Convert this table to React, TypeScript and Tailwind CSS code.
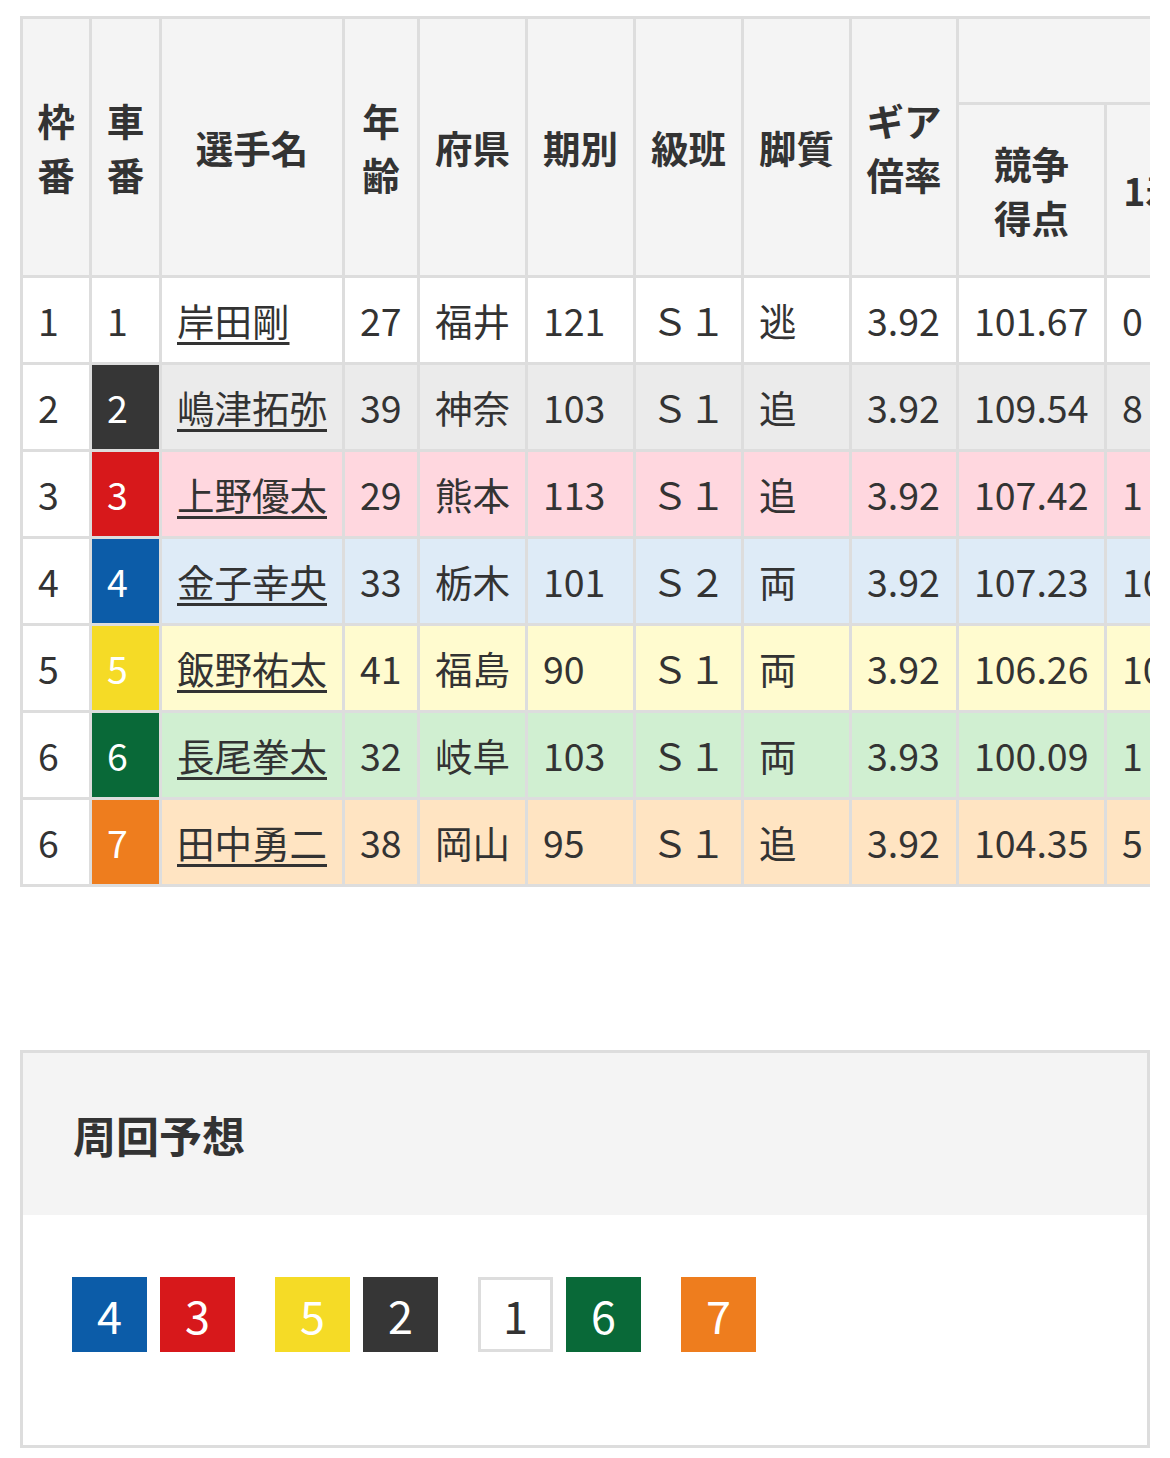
type Racer = {
  waku: number;
  car: number;
  name: string;
  age: string;
  pref: string;
  term: string;
  rank: string;
  style: string;
  gear: string;
  score: string;
  first: string;
  rowBg: string;
  carBg: string;
  carText: string;
};

const racers: Racer[] = [
  { waku: 1, car: 1, name: '岸田剛', age: '27', pref: '福井', term: '121', rank: 'Ｓ１', style: '逃', gear: '3.92', score: '101.67', first: '0', rowBg: 'bg-white', carBg: 'bg-white', carText: 'text-[#333]' },
  { waku: 2, car: 2, name: '嶋津拓弥', age: '39', pref: '神奈', term: '103', rank: 'Ｓ１', style: '追', gear: '3.92', score: '109.54', first: '8', rowBg: 'bg-[#ebebeb]', carBg: 'bg-[#363636]', carText: 'text-white' },
  { waku: 3, car: 3, name: '上野優太', age: '29', pref: '熊本', term: '113', rank: 'Ｓ１', style: '追', gear: '3.92', score: '107.42', first: '1', rowBg: 'bg-[#ffd7df]', carBg: 'bg-[#d7181b]', carText: 'text-white' },
  { waku: 4, car: 4, name: '金子幸央', age: '33', pref: '栃木', term: '101', rank: 'Ｓ２', style: '両', gear: '3.92', score: '107.23', first: '10', rowBg: 'bg-[#deebf7]', carBg: 'bg-[#0c5ca8]', carText: 'text-white' },
  { waku: 5, car: 5, name: '飯野祐太', age: '41', pref: '福島', term: '90', rank: 'Ｓ１', style: '両', gear: '3.92', score: '106.26', first: '10', rowBg: 'bg-[#fffbcf]', carBg: 'bg-[#f5db26]', carText: 'text-white' },
  { waku: 6, car: 6, name: '長尾拳太', age: '32', pref: '岐阜', term: '103', rank: 'Ｓ１', style: '両', gear: '3.93', score: '100.09', first: '1', rowBg: 'bg-[#d0efd1]', carBg: 'bg-[#096938]', carText: 'text-white' },
  { waku: 6, car: 7, name: '田中勇二', age: '38', pref: '岡山', term: '95', rank: 'Ｓ１', style: '追', gear: '3.92', score: '104.35', first: '5', rowBg: 'bg-[#ffe4c2]', carBg: 'bg-[#ee7d1e]', carText: 'text-white' },
];

const chips = [
  [
    { n: 4, cls: 'bg-[#0c5ca8] text-white' },
    { n: 3, cls: 'bg-[#d7181b] text-white' },
  ],
  [
    { n: 5, cls: 'bg-[#f5db26] text-white' },
    { n: 2, cls: 'bg-[#363636] text-white' },
  ],
  [
    { n: 1, cls: 'bg-white text-[#333] border-[3px] border-[#ddd]' },
    { n: 6, cls: 'bg-[#096938] text-white' },
  ],
  [{ n: 7, cls: 'bg-[#ee7d1e] text-white' }],
];

function Th({ children, className = '' }: { children?: React.ReactNode; className?: string }) {
  return (
    <div className={`bg-[#f4f4f4] flex items-center justify-center text-center font-bold leading-[54px] ${className}`}>
      {children}
    </div>
  );
}

function Td({ children, className = '' }: { children?: React.ReactNode; className?: string }) {
  return (
    <div className={`flex items-center pl-[15px] whitespace-nowrap ${className}`}>{children}</div>
  );
}

export default function App() {
  return (
    <div className="bg-white min-h-[1458px] pt-[16px] px-[20px] text-[#333] font-['Noto_Sans_CJK_JP','Noto_Sans',sans-serif] text-[37.5px]">
      <div className="overflow-hidden">
        <div className="grid w-max bg-[#ddd] p-[3px] gap-[3px] grid-cols-[66px_67px_180px_72px_105px_105px_105px_105px_104px_145px_92px] grid-rows-[83px_170px_repeat(7,84px)]">
          <Th className="row-span-2">枠<br />番</Th>
          <Th className="row-span-2">車<br />番</Th>
          <Th className="row-span-2">選手名</Th>
          <Th className="row-span-2">年<br />齢</Th>
          <Th className="row-span-2">府県</Th>
          <Th className="row-span-2">期別</Th>
          <Th className="row-span-2">級班</Th>
          <Th className="row-span-2">脚質</Th>
          <Th className="row-span-2">ギア<br />倍率</Th>
          <Th className="col-span-2" />
          <Th>競争<br />得点</Th>
          <Th>1着</Th>

          {racers.map((r) => (
            <div key={r.car} className="contents">
              <Td className="bg-white">{r.waku}</Td>
              <Td className={`${r.carBg} ${r.carText}`}>{r.car}</Td>
              <Td className={r.rowBg}>
                <a href="#" className="underline decoration-[2.5px] underline-offset-[6px]">
                  {r.name}
                </a>
              </Td>
              <Td className={r.rowBg}>{r.age}</Td>
              <Td className={r.rowBg}>{r.pref}</Td>
              <Td className={r.rowBg}>{r.term}</Td>
              <Td className={r.rowBg}>{r.rank}</Td>
              <Td className={r.rowBg}>{r.style}</Td>
              <Td className={r.rowBg}>{r.gear}</Td>
              <Td className={r.rowBg}>{r.score}</Td>
              <Td className={r.rowBg}>{r.first}</Td>
            </div>
          ))}
        </div>
      </div>

      <section className="mt-[163px] border-[3px] border-[#ddd]">
        <div className="h-[162px] bg-[#f4f4f4] flex items-center px-[50px]">
          <h2 className="text-[43px] font-bold">周回予想</h2>
        </div>
        <div className="h-[230px] pt-[62px] px-[49px] flex gap-[40px]">
          {chips.map((group, i) => (
            <div key={i} className="flex gap-[13px]">
              {group.map((c) => (
                <div
                  key={c.n}
                  className={`w-[75px] h-[75px] flex items-center justify-center text-[45px] leading-none ${c.cls}`}
                >
                  {c.n}
                </div>
              ))}
            </div>
          ))}
        </div>
      </section>
    </div>
  );
}
